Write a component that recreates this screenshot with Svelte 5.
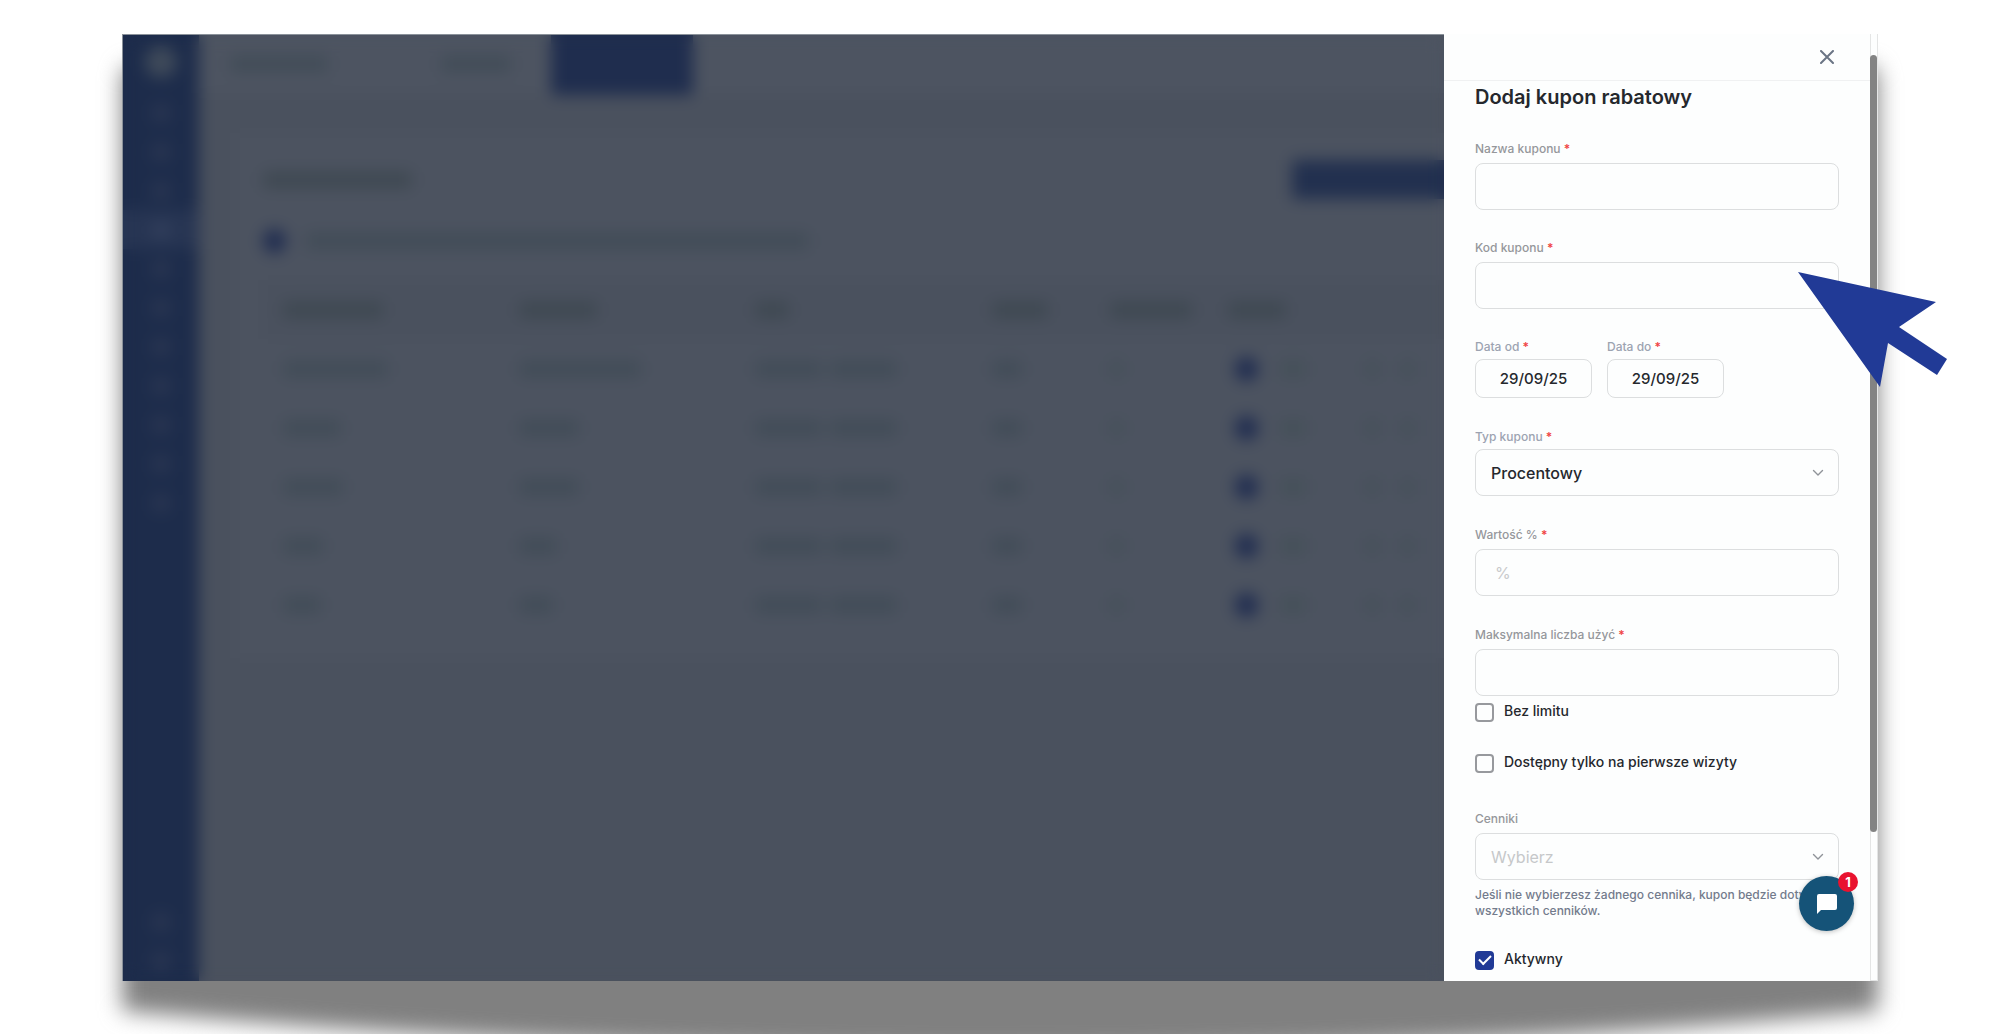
<script lang="ts">
  const navIcons = [false, false, false, true, false, false, false, false, false, false, false];

  const headings = [100, 78, 34, 56, 82, 58, 0];
  const rows = [
    { name: 105, code: 122 },
    { name: 58, code: 60 },
    { name: 60, code: 60 },
    { name: 40, code: 38 },
    { name: 38, code: 34 }
  ];

  let name = $state('');
  let code = $state('');
  let dateFrom = $state('29/09/25');
  let dateTo = $state('29/09/25');
  let kind = $state('percent');
  let value = $state('');
  let maxUses = $state('');
  let unlimited = $state(false);
  let firstVisit = $state(false);
  let priceList = $state('');
  let active = $state(true);
</script>

{#snippet chevron()}
  <svg class="chevron" viewBox="0 0 12 8" aria-hidden="true"><path d="M1.500 1.500 6 6l4.500-4.500" /></svg>
{/snippet}

{#snippet check(id: string, text: string, on: boolean, toggle: () => void)}
  <div class="check">
    <input type="checkbox" {id} checked={on} onchange={toggle} />
    <label for={id}>{text}</label>
  </div>
{/snippet}

<div class="page">
  <div class="stage">
    <svg class="shadow" viewBox="0 0 1755 1000" preserveAspectRatio="none" aria-hidden="true">
      <path d="M0 44Q0 32 12 32H1743Q1755 32 1755 44V973Q878 1056 0 973Z" />
    </svg>

    <div class="window">
      <div class="behind" aria-hidden="true">
        <div class="sidebar">
          <span class="logo"></span>
          {#each navIcons as current}
            <span class="nav" class:current><i></i></span>
          {/each}
          <span class="nav last"><i></i></span>
          <span class="nav"><i></i></span>
        </div>
        <div class="main">
          <div class="topbar">
            <span class="bar crumb"></span>
            <span class="bar tab-off"></span>
            <span class="tab-on"></span>
          </div>
          <div class="card">
            <div class="card-head">
              <span class="bar strong card-title"></span>
              <span class="action"></span>
            </div>
            <div class="option">
              <span class="knob"></span>
              <span class="bar option-text"></span>
            </div>
            <table>
              <thead>
                <tr>
                  {#each headings as w}
                    <th><span class="bar strong" style:width="{w}px"></span></th>
                  {/each}
                </tr>
              </thead>
              <tbody>
                {#each rows as row}
                  <tr>
                    <td><span class="bar" style:width="{row.name}px"></span></td>
                    <td><span class="bar" style:width="{row.code}px"></span></td>
                    <td><div class="pair"><span class="bar range"></span><span class="bar range"></span></div></td>
                    <td><span class="bar amount"></span></td>
                    <td><span class="bar faint dot"></span></td>
                    <td><div class="pair"><span class="knob"></span><span class="bar faint state"></span></div></td>
                    <td><div class="pair wide"><span class="bar faint dot"></span><span class="bar faint dot"></span></div></td>
                  </tr>
                {/each}
              </tbody>
            </table>
          </div>
        </div>
        <div class="veil"></div>
      </div>

      <div class="drawer" role="dialog" aria-labelledby="drawer-title">
        <div class="panel">
          <header>
            <button class="close" type="button" aria-label="Zamknij">
              <svg viewBox="0 0 14 14"><path d="M1 1l12 12M13 1 1 13" /></svg>
            </button>
          </header>
          <form>
            <h1 id="drawer-title">Dodaj kupon rabatowy</h1>

            <div class="field">
              <label for="name">Nazwa kuponu <b>*</b></label>
              <input id="name" type="text" bind:value={name} />
            </div>
            <div class="field">
              <label for="code">Kod kuponu <b>*</b></label>
              <input id="code" type="text" bind:value={code} />
            </div>
            <div class="dates">
              <div class="field tight">
                <label for="from">Data od <b>*</b></label>
                <input id="from" type="text" bind:value={dateFrom} />
              </div>
              <div class="field tight">
                <label for="to">Data do <b>*</b></label>
                <input id="to" type="text" bind:value={dateTo} />
              </div>
            </div>
            <div class="field tight">
              <label for="kind">Typ kuponu <b>*</b></label>
              <div class="select">
                <select id="kind" bind:value={kind}>
                  <option value="percent">Procentowy</option>
                </select>
                {@render chevron()}
              </div>
            </div>
            <div class="field amount-field">
              <label for="value">Wartość % <b>*</b></label>
              <input id="value" type="text" placeholder="%" bind:value />
            </div>
            <div class="field">
              <label for="max">Maksymalna liczba użyć <b>*</b></label>
              <input id="max" type="text" bind:value={maxUses} />
            </div>
            <div class="checks">
              {@render check('unlimited', 'Bez limitu', unlimited, () => (unlimited = !unlimited))}
              {@render check('first', 'Dostępny tylko na pierwsze wizyty', firstVisit, () => (firstVisit = !firstVisit))}
            </div>
            <div class="field lists">
              <label for="lists">Cenniki</label>
              <div class="select empty">
                <select id="lists" bind:value={priceList}>
                  <option value="">Wybierz</option>
                </select>
                {@render chevron()}
              </div>
              <p>Jeśli nie wybierzesz żadnego cennika, kupon będzie dotyczył wszystkich cenników.</p>
            </div>
            {@render check('active', 'Aktywny', active, () => (active = !active))}
          </form>
        </div>
        <div class="track"><div class="thumb"></div></div>

        <button class="chat" type="button" aria-label="Czat">
          <svg viewBox="0 0 24 24"><path d="M4 2h16a2 2 0 0 1 2 2v12a2 2 0 0 1-2 2H6l-4 4V4a2 2 0 0 1 2-2Z" /></svg>
          <span class="count">1</span>
        </button>
        <svg class="pointer" viewBox="0 0 149 115" aria-hidden="true">
          <path d="M0 0 138 30 101 55 149 87 139 103 90 71 82 115Z" />
        </svg>
      </div>
    </div>
  </div>
</div>

<style>
  :global(body) {
    background: #fff;
  }

  .page,
  .page * {
    box-sizing: border-box;
  }

  .page {
    min-height: 100vh;
    padding: 34px 122px 54px;
    overflow: hidden;
    background: #fff;
    color: #25282d;
    font-family: Inter, 'Liberation Sans', sans-serif;
  }

  .stage {
    position: relative;
  }

  .shadow {
    position: absolute;
    inset: 0;
    width: 100%;
    height: 106%;
    overflow: visible;
    fill: #808080;
    filter: blur(11px);
  }

  .window {
    position: relative;
    display: flex;
  }

  /* Application behind the drawer */
  .behind {
    position: relative;
    display: flex;
    flex: 1;
    min-width: 0;
    overflow: hidden;
    background: #4a515e;
  }

  .veil {
    position: absolute;
    inset: 0;
    border: 1px solid #8b929a;
    border-width: 1px 0 0 1px;
    backdrop-filter: blur(8px);
  }

  .sidebar {
    display: flex;
    flex: none;
    flex-direction: column;
    align-items: center;
    width: 77px;
    padding: 12px 0 1px;
    background: #1d2c4b;
  }

  .logo {
    width: 32px;
    height: 32px;
    margin-bottom: 15px;
    border-radius: 50%;
    background: #3f4a5a;
  }

  .nav {
    display: grid;
    place-items: center;
    width: 100%;
    height: 39px;
  }

  .nav i {
    width: 18px;
    height: 18px;
    border-radius: 6px;
    background: #2a3652;
  }

  .nav.current {
    background: #273553;
  }

  .nav.current i {
    background: #323f5c;
  }

  .nav.last {
    margin-top: auto;
  }

  .main {
    flex: 1;
    min-width: 0;
  }

  .topbar {
    display: flex;
    align-items: flex-start;
    height: 59px;
    padding-left: 31px;
    background: #4d5461;
  }

  .bar {
    display: block;
    height: 16px;
    border-radius: 4px;
    background: #414c57;
  }

  .bar.strong {
    background: #3e4851;
  }

  .bar.faint {
    background: #445058;
  }

  .crumb {
    width: 98px;
    margin: 22px 113px 0 0;
  }

  .tab-off {
    width: 70px;
    margin: 22px 40px 0 0;
  }

  .tab-on {
    width: 142px;
    height: 61px;
    background: #1f2d4e;
  }

  .card {
    margin: 40px 0 0 36px;
    padding: 27px 0 24px 28px;
    background: #4c5360;
  }

  .card-head,
  .option,
  .pair {
    display: flex;
    align-items: center;
  }

  .card-head {
    justify-content: space-between;
  }

  .card-title {
    width: 149px;
  }

  .action {
    width: 152px;
    height: 39px;
    background: #22304f;
  }

  .option {
    gap: 20px;
    height: 42px;
    margin: 21px 0 18px;
  }

  .option-text {
    width: 503px;
  }

  .knob {
    width: 23px;
    height: 24px;
    border-radius: 12px;
    background: #1f2c50;
  }

  table {
    width: 100%;
    table-layout: fixed;
    border-collapse: collapse;
  }

  th {
    height: 59px;
    padding: 0 0 0 20px;
    background: #4a515e;
  }

  td {
    height: 59px;
    padding: 0 0 0 20px;
  }

  th:nth-child(-n + 3) {
    width: 20%;
  }

  th:nth-child(4),
  th:nth-child(5) {
    width: 10%;
  }

  th:nth-child(6) {
    width: 11%;
  }

  .pair {
    gap: 8px;
  }

  .pair.wide {
    gap: 22px;
    padding-left: 8px;
  }

  .pair .knob {
    margin: 0 14px 0 7px;
  }

  .range {
    width: 67px;
  }

  .amount {
    width: 30px;
  }

  .state {
    width: 26px;
  }

  .dot {
    width: 13px;
  }

  /* Drawer */
  .drawer {
    position: relative;
    display: flex;
    flex: none;
    width: 434px;
    background: #fdfefe;
  }

  .panel {
    flex: 1;
    min-width: 0;
  }

  header {
    display: flex;
    align-items: center;
    justify-content: flex-end;
    height: 47px;
    padding: 0 31px;
    border-bottom: 1px solid #f0f1f2;
  }

  .close {
    display: grid;
    place-items: center;
    width: 24px;
    height: 24px;
    padding: 0;
    border: 0;
    background: none;
  }

  .close svg {
    width: 14px;
    height: 14px;
    fill: none;
    stroke: #6b7585;
    stroke-width: 2;
    stroke-linecap: round;
  }

  form {
    display: flex;
    flex-direction: column;
    padding: 0 31px 11px;
  }

  h1 {
    margin: 0 0 28px;
    font-size: 20px;
    font-weight: 600;
    line-height: 32px;
  }

  .field {
    display: flex;
    flex-direction: column;
    gap: 6px;
    margin-bottom: 30px;
    color: #95979b;
    font-size: 12px;
    font-weight: 500;
    line-height: 16px;
  }

  .field.tight {
    gap: 4px;
    margin-bottom: 31px;
    color: #9ca3b1;
  }

  .field.amount-field,
  .field.lists {
    margin-bottom: 31px;
  }

  .field b {
    color: #f04444;
    font-weight: 600;
  }

  .field input,
  select {
    width: 100%;
    height: 47px;
    padding: 0 19px;
    border: 1px solid #dcdedf;
    border-radius: 8px;
    outline: 0;
    background: #fdfefe;
    color: #25282d;
    font: 500 16px Inter, 'Liberation Sans', sans-serif;
  }

  .field input::placeholder {
    color: #c9cacc;
    font-weight: 400;
    opacity: 1;
  }

  .dates {
    display: flex;
    gap: 15px;
  }

  .dates .field {
    width: 117px;
  }

  .dates input {
    height: 39px;
    padding: 0;
    font-size: 15px;
    text-align: center;
  }

  .select {
    display: grid;
    align-items: center;
  }

  .select > :global(*) {
    grid-area: 1 / 1;
  }

  select {
    padding: 0 15px;
    appearance: none;
  }

  .empty select {
    color: #c6c8ca;
    font-weight: 400;
  }

  .chevron {
    justify-self: end;
    width: 12px;
    height: 8px;
    margin-right: 15px;
    fill: none;
    stroke: #8f9399;
    stroke-width: 1.4;
    stroke-linecap: round;
    stroke-linejoin: round;
    pointer-events: none;
  }

  .checks {
    display: flex;
    flex-direction: column;
    gap: 31px;
    margin: -24px 0 38px;
  }

  .check {
    display: flex;
    align-items: center;
    gap: 10px;
    height: 20px;
    font-size: 14px;
    font-weight: 500;
    line-height: 18px;
  }

  .check label {
    padding-bottom: 2px;
  }

  .check input {
    display: grid;
    place-items: center;
    width: 19px;
    height: 19px;
    margin: 0;
    border: 2px solid #97999d;
    border-radius: 4px;
    appearance: none;
    background: #fdfefe;
  }

  .check input:checked {
    border-color: #213a96;
    background: #213a96;
  }

  .check input:checked::before {
    width: 10px;
    height: 5px;
    margin-bottom: 4px;
    border: solid #fff;
    border-width: 0 0 2px 2px;
    content: '';
    transform: rotate(-45deg);
  }

  .field p {
    margin: 1px 0 0;
    color: #737b8c;
  }

  .track {
    width: 8px;
    padding-top: 21px;
    border: 1px solid #e4e5e5;
    border-width: 0 1px 1px;
    background: #fdfefe;
  }

  .thumb {
    width: 7px;
    height: 84%;
    margin-left: -1px;
    border-radius: 4px;
    background: #838383;
  }

  .chat {
    position: absolute;
    right: 24px;
    bottom: 50px;
    display: grid;
    place-items: center;
    width: 55px;
    height: 55px;
    padding: 0;
    border: 0;
    border-radius: 50%;
    background: #155378;
    box-shadow: 0 1px 5px rgb(0 0 0 / 25%);
  }

  .chat svg {
    width: 24px;
    height: 24px;
    fill: #fff;
  }

  .count {
    position: absolute;
    top: -4px;
    right: -4px;
    width: 20px;
    height: 20px;
    border-radius: 50%;
    background: #e9132f;
    color: #fff;
    font: 700 13px/20px Inter, 'Liberation Sans', sans-serif;
    text-align: center;
  }

  .pointer {
    position: absolute;
    top: 238px;
    right: -69px;
    width: 149px;
    height: 115px;
    fill: #213a96;
  }
</style>
